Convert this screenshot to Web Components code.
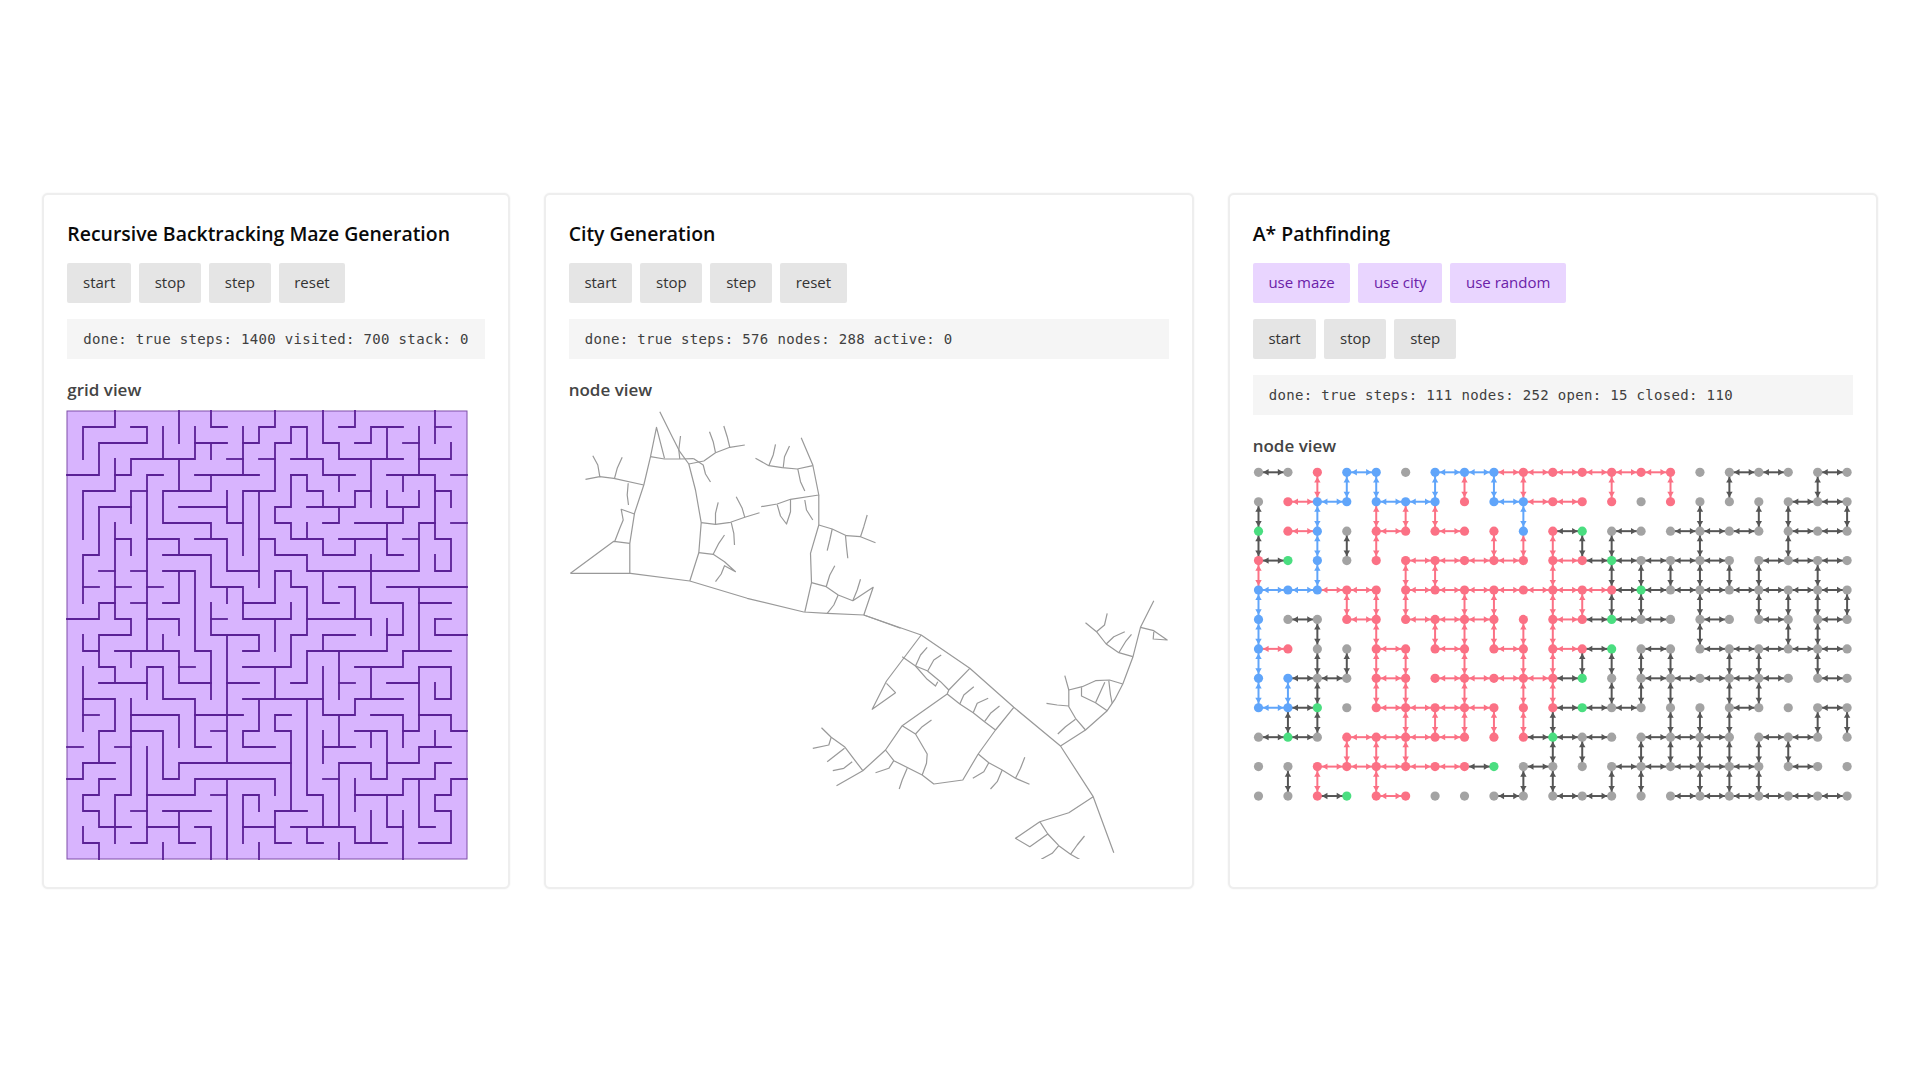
<!DOCTYPE html>
<html>
<head>
<meta charset="utf-8">
<title>Generation demos</title>
<style>
    html, body { margin: 0; height: 100%; background: #fff; }
    body {
        box-sizing: border-box;
        padding-top: 2px;
        display: flex;
        align-items: center;
        justify-content: center;
        font-family: "Open Sans", "Noto Sans", sans-serif;
    }
    .row { display: flex; gap: 34px; align-items: stretch; }
</style>
</head>
<body>
<div class="row">
    <demo-card heading="Recursive Backtracking Maze Generation">
        <ctl-row>
            <ctl-btn>start</ctl-btn><ctl-btn>stop</ctl-btn><ctl-btn>step</ctl-btn><ctl-btn>reset</ctl-btn>
        </ctl-row>
        <stat-box>done: true steps: 1400 visited: 700 stack: 0</stat-box>
        <view-label>grid view</view-label>
        <maze-view></maze-view>
    </demo-card>
    <demo-card heading="City Generation" wide>
        <ctl-row>
            <ctl-btn>start</ctl-btn><ctl-btn>stop</ctl-btn><ctl-btn>step</ctl-btn><ctl-btn>reset</ctl-btn>
        </ctl-row>
        <stat-box>done: true steps: 576 nodes: 288 active: 0</stat-box>
        <view-label>node view</view-label>
        <city-view></city-view>
    </demo-card>
    <demo-card heading="A* Pathfinding" wide>
        <ctl-row>
            <ctl-btn accent>use maze</ctl-btn><ctl-btn accent>use city</ctl-btn><ctl-btn accent>use random</ctl-btn>
        </ctl-row>
        <ctl-row>
            <ctl-btn>start</ctl-btn><ctl-btn>stop</ctl-btn><ctl-btn>step</ctl-btn>
        </ctl-row>
        <stat-box>done: true steps: 111 nodes: 252 open: 15 closed: 110</stat-box>
        <view-label>node view</view-label>
        <astar-view></astar-view>
    </demo-card>
</div>

<script>
class DemoCard extends HTMLElement {
    constructor() {
        super();
        this.attachShadow({ mode: 'open' });
        this.shadowRoot.innerHTML = `
            <style>
                :host {
                    display: block;
                    box-sizing: border-box;
                    background: #fff;
                    border: 2px solid #eeeeee;
                    border-radius: 6px;
                    box-shadow: 0 0 2px rgba(0, 0, 0, 0.07);
                    padding: 23px 23px 28px;
                }
                :host([wide]) { width: 650px; }
                h2 {
                    margin: 0 0 15px;
                    font-size: 19.45px;
                    line-height: 31px;
                    height: 30px;
                    font-weight: 600;
                    color: #0a0a0a;
                    white-space: nowrap;
                }
            </style>
            <h2>${this.getAttribute('heading')}</h2>
            <slot></slot>
        `;
    }
}

class CtlRow extends HTMLElement {
    constructor() {
        super();
        this.attachShadow({ mode: 'open' });
        this.shadowRoot.innerHTML = `
            <style>
                :host { display: flex; gap: 8px; margin-bottom: 16px; }
            </style>
            <slot></slot>
        `;
    }
}

class CtlBtn extends HTMLElement {
    constructor() {
        super();
        this.attachShadow({ mode: 'open' });
        this.shadowRoot.innerHTML = `
            <style>
                :host {
                    display: block;
                    height: 40px;
                    line-height: 39px;
                    padding: 0 15.7px;
                    border-radius: 2px;
                    background: #e5e5e5;
                    color: #333;
                    font-size: 15px;
                    cursor: pointer;
                }
                :host([accent]) { background: #e9d5ff; color: #6b21a8; }
            </style>
            <slot></slot>
        `;
    }
}

class StatBox extends HTMLElement {
    constructor() {
        super();
        this.attachShadow({ mode: 'open' });
        this.shadowRoot.innerHTML = `
            <style>
                :host {
                    display: block;
                    height: 40px;
                    line-height: 40px;
                    padding: 0 16px;
                    background: #f5f5f5;
                    color: #404040;
                    font-family: "DejaVu Sans Mono", "Liberation Mono", monospace;
                    font-size: 14px;
                    letter-spacing: 0.33px;
                    white-space: nowrap;
                }
            </style>
            <slot></slot>
        `;
    }
}

class ViewLabel extends HTMLElement {
    constructor() {
        super();
        this.attachShadow({ mode: 'open' });
        this.shadowRoot.innerHTML = `
            <style>
                :host {
                    display: block;
                    margin: 16px 0 10px;
                    height: 26px;
                    line-height: 29px;
                    font-size: 17px;
                    font-weight: 600;
                    color: #444;
                }
            </style>
            <slot></slot>
        `;
    }
}

const MAZE_WALLS = [
    '3,0 3,1 1,1 1,3', '4,1 5,1 5,2 2,2 2,4 0,4', '6,1 6,3', '7,0 7,2',
    '8,1 8,3 4,3 4,4 3,4', '3,3 3,5 1,5 1,8', '8,2 10,2', '9,2 9,3', '9,0 9,1 10,1',
    '11,1 11,4', '10,3 11,3', '11,2 12,2 12,1 13,1 13,0', '8,4 12,4', '7,3 7,5',
    '9,4 9,5 6,5 6,7 9,7 9,8', '6,4 5,4 5,15', '4,5 5,5', '4,5 4,7', '2,6 4,6',
    '2,6 2,9 1,9 1,12', '3,7 3,13 4,13 4,14 2,14 2,16 3,16 3,17', '3,8 4,8 4,9',
    '2,10 3,10', '4,10 5,10', '1,11 2,11', '3,11 4,11', '5,11 6,11', '4,12 5,12',
    '0,13 2,13 2,12 3,12', '1,14 1,15 2,15', '5,8 7,8 7,9',
    '6,9 9,9 9,11 11,11 11,13 14,13 14,12', '6,10 8,10 8,15 9,15 9,18', '7,10 7,12 6,12',
    '5,13 7,13 7,14', '6,14 6,15', '7,6 10,6', '10,5 10,7 11,7',
    '14,2 13,2 13,5 11,5 11,9', '12,5 12,11', '8,8 10,8 10,10 12,10', '12,3 13,3',
    '14,2 14,1 15,1 15,3', '14,3 16,3 16,4 18,4', '17,4 17,5',
    '14,4 15,4 15,5 16,5 16,6', '14,4 14,6 13,6 13,7 14,7 14,8 16,8 16,9 18,9 18,8',
    '15,6 18,6 18,5 19,5', '19,3 19,6', '17,6 17,7 16,7', '15,7 15,8',
    '18,7 21,7 21,6 20,6 20,5', '21,6 22,6 22,5', '20,7 20,9 21,9', '17,8 20,8', '21,8 22,8',
    '16,0 16,2 17,2 17,3 21,3', '18,0 18,1 17,1', '18,2 19,2 19,1 21,1', '20,1 20,3',
    '21,2 22,2', '22,1 22,4 20,4', '22,4 23,4 23,8 24,8 24,10 23,10 23,9',
    '22,3 24,3 24,2', '23,0 23,2', '23,1 24,1', '24,4 25,4', '21,4 21,5',
    '23,5 24,5 24,6', '24,7 25,7', '23,7 22,7 22,10 15,10 15,9 13,9 13,8 12,8',
    '19,9 19,12 21,12 21,14 20,14', '20,13 20,15 15,15 15,17 14,17', '16,14 18,14', '16,14 16,15',
    '22,11 22,15', '21,15 24,15', '21,15 21,16 18,16', '20,11 25,11', '22,12 24,12',
    '23,13 24,13', '23,13 23,14 25,14', '16,10 16,12 17,12', '17,11 18,11 18,13',
    '15,13 19,13 19,14', '13,12 13,10 14,10 14,11 15,11 15,14 14,14 14,16 11,16', '13,12 11,12',
    '10,11 10,12', '9,12 9,14 12,14 12,15 11,15', '9,13 10,13', '10,14 10,22', '10,23 10,28',
    '13,13 13,15', '3,15 7,15 7,17 9,17', '4,15 4,16', '7,16 8,16',
    '1,16 1,20', '1,18 3,18 3,20 2,20 2,22', '1,22 3,22', '1,22 1,23 0,23', '1,19 2,19',
    '0,21 1,21', '3,21 4,21', '4,18 4,24 3,24 3,27', '4,19 7,19 7,21',
    '4,20 6,20 6,23 7,23 7,22 14,22', '5,21 5,27 4,27', '5,24 8,24 8,23 13,23 13,24',
    '4,25 5,25', '6,25 9,25', '7,25 7,27 8,27', '5,26 7,26', '8,26 9,26 9,28', '6,27 6,28',
    '9,24 10,24', '3,23 2,23 2,24 1,24 1,25 2,25 2,26 4,26', '1,26 1,27 2,27 2,28',
    '2,17 5,17', '5,18 5,16 6,16 6,18 8,18 8,21 9,21', '8,19 11,19', '9,20 10,20',
    '10,17 12,17', '13,16 13,18', '11,18 16,18', '12,18 12,20 11,20 11,21 13,21',
    '16,16 16,19 18,19 18,18 21,18', '15,18 15,24 16,24 16,26',
    '14,19 13,19 13,20 14,20 14,25', '13,25 15,25', '13,25 13,27 14,27', '11,26 13,26',
    '12,25 12,24 11,24 11,27', '12,27 12,28', '17,15 17,18', '17,17 18,17', '19,16 19,18',
    '20,17 22,17', '22,16 24,16 24,18 23,18 23,17', '22,16 22,20 21,20',
    '19,19 21,19 21,21', '22,19 24,19 24,20 25,20',
    '18,20 20,20 20,23 19,23 19,22 17,22 17,26', '19,20 19,21',
    '20,22 22,22 22,21 24,21', '23,20 23,21', '16,20 16,22', '16,21 18,21', '17,19 17,21',
    '16,23 17,23', '18,23 18,25', '18,24 21,24 21,23 23,23 23,22 24,22',
    '22,23 22,26 23,26', '25,23 24,23 24,24 23,24 23,25 24,25 24,27 22,27',
    '20,24 20,26 21,26', '21,25 21,28', '19,25 19,27', '14,26 18,26 18,27 20,27',
    '15,26 15,27 16,27', '17,27 17,28'
];

class MazeView extends HTMLElement {
    constructor() {
        super();
        this.attachShadow({ mode: 'open' });
        const size = 16;
        const lines = MAZE_WALLS.map(w => {
            const pts = w.split(' ').map(p => p.split(',').map(n => n * size).join(',')).join(' ');
            return `<polyline points="${pts}"/>`;
        }).join('');
        this.shadowRoot.innerHTML = `
            <style>
                :host { display: block; width: 400px; height: 448px; }
                svg { display: block; overflow: visible; }
            </style>
            <svg width="400" height="448" viewBox="0 0 400 448">
                <rect x="0" y="0" width="400" height="448" fill="#d8b4fe" stroke="#7e4fa8" stroke-width="1"/>
                <g fill="none" stroke="#5b2196" stroke-width="1.8" stroke-linecap="square">${lines}</g>
            </svg>
        `;
    }
}

// city roads, read off in two pieces of the picture (x3 coordinates)
const CITY_A = [
    [30,520,210,520,388,543,560,595,730,636,800,640,910,645,1020,685],
    [30,520,160,424,208,430],
    [208,520,208,430,222,340,250,255,270,170,288,82,312,175],
    [270,170,312,177,358,177,400,176],
    [298,35,335,110,358,155,385,192,405,270,422,368,415,458,388,543],
    [358,177,355,150,360,108],
    [385,192,430,183,465,158,508,142,553,135],
    [465,158,458,125,447,95],
    [508,142,500,110,490,78],
    [400,176,428,195,435,222,450,246],
    [250,255,160,235,118,230,75,238],
    [118,230,112,195,97,167],
    [162,235,170,205,185,172],
    [203,250,200,285,204,315],
    [222,342,182,328,188,360,178,385,163,424],
    [422,368,465,373,510,367,553,352,597,338],
    [465,373,465,340,473,307],
    [553,352,545,325,527,290],
    [512,367,520,400,522,435],
    [415,458,458,463,492,485,525,515,492,497,482,522,465,545],
    [458,463,475,430,492,405],
    [602,320,650,312,690,298,775,285,757,195,722,113],
    [757,197,710,207,665,203,625,197,585,175],
    [625,197,638,165,645,133],
    [668,203,672,170,687,138],
    [712,207,720,245,733,273],
    [650,314,660,348,678,372,690,335,690,300],
    [733,300,738,330,757,360],
    [775,285,775,375,750,460,753,548,733,636],
    [775,375,815,387,858,407,900,410,945,428],
    [815,387,808,420,800,452],
    [855,407,858,440,862,475],
    [900,410,910,380,920,345],
    [753,548,797,560,833,585,877,602,938,562,910,645],
    [797,560,808,525,823,497],
    [877,602,890,570,900,538],
    [833,585,820,615,800,640]
];
const CITY_B = [
    [190,105,362,165,508,265,640,382,780,498,878,650,940,818],
    [362,165,258,303,215,388,285,338,258,310],
    [305,230,345,258,380,272,420,305,445,330],
    [345,258,380,298,405,318,412,305],
    [345,258,360,225,380,202],
    [382,272,400,240,422,225],
    [508,265,445,330,440,342,305,437,255,510,187,572,108,617],
    [440,342,478,372,518,398,552,425,585,450],
    [640,382,585,450,533,522,487,600,400,612,365,585,280,542,255,510],
    [478,372,490,345,520,320],
    [518,398,530,370,563,355],
    [552,425,570,400,597,378],
    [305,437,345,462,380,522,378,550,365,585],
    [345,462,365,440,393,420],
    [187,572,132,500,92,472,63,443],
    [92,472,85,495,37,505],
    [132,505,80,545],
    [155,545,130,565,97,572],
    [280,542,265,565,225,578],
    [320,565,305,600,296,627],
    [533,522,565,548,605,570,645,595,687,613],
    [565,548,550,575,517,595],
    [605,570,590,605,570,627],
    [645,595,660,565,673,532],
    [780,498,855,450,920,392,945,355,967,312,997,232,1020,142,1060,62],
    [1020,142,1060,152,1100,180,1058,177,1060,155],
    [997,230,955,218,917,192,888,155,855,128],
    [888,155,912,135,920,100],
    [917,192,940,170,973,155],
    [955,218,975,185,993,163],
    [967,312,927,300,885,302,845,320,805,330,793,287],
    [805,330,805,380,825,415,855,450],
    [805,378,770,375,738,370],
    [825,418,795,440,772,462],
    [920,392,885,368,843,348,843,322],
    [885,368,900,335,913,307],
    [925,302,930,345,935,370],
    [878,650,805,698,718,725,645,775,688,800,742,762,718,725],
    [742,762,775,797,810,823,850,845],
    [775,797,755,820,722,838],
    [810,823,830,795,852,768]
];

class CityView extends HTMLElement {
    constructor() {
        super();
        this.attachShadow({ mode: 'open' });
        const toLine = (road, ox, oy) => {
            const pts = [];
            for (let i = 0; i < road.length; i += 2) {
                pts.push(`${(ox + road[i] / 3).toFixed(1)},${(oy + road[i + 1] / 3).toFixed(1)}`);
            }
            return `<polyline points="${pts.join(' ')}"/>`;
        };
        const a = CITY_A.map(r => toLine(r, 560 - 568.5, 400 - 411)).join('');
        const b = CITY_B.map(r => toLine(r, 800 - 568.5, 580 - 411)).join('');
        this.shadowRoot.innerHTML = `
            <style>
                :host { display: block; width: 600px; height: 448px; }
                svg { display: block; }
            </style>
            <svg width="600" height="448" viewBox="0 0 600 448">
                <g fill="none" stroke="#999" stroke-width="1.2" stroke-linejoin="round">${a}${b}</g>
            </svg>
        `;
    }
}

const NODE_ROWS = [
    'ggrbbgbbbrrrrrrgggggg',
    'grbbbbbrbbrrrgrgggggg',
    'nrbgrrrrrbrnggggggggg',
    'rnbgrrrrrrrrngggggggg',
    'bbbrrrrrrrrrrnggggggg',
    'bggrrrrrrrrrngggggggg',
    'brggrrrrrrrrngggggggg',
    'bbggrrrrrrrnggggggggg',
    'bbngrrrrrrrnggggggggg',
    'gngrrrrrrrngggggggggg',
    'ggrrrrrrngggggggggggg',
    'ggrnrrggggggggggggggg'
];
const H_EDGES = [
    [0,3,6,7,8,9,10,11,12,13,16,17,19],
    [1,2,4,5,8,9,10,18,19],
    [1,4,6,10,12,14,15,16,18,19],
    [0,5,6,7,8,10,11,12,13,14,15,17,18,19],
    [0,1,2,3,5,6,7,8,9,10,11,12,13,14,15,16,17,18,19],
    [1,3,5,6,7,10,11,12,13,15,17,19],
    [0,4,6,8,10,11,13,15,16,17,18,19],
    [1,2,4,6,7,8,9,10,13,14,15,16,17,19],
    [0,1,4,5,6,7,10,11,12,16,19],
    [0,1,3,4,5,6,9,10,11,13,14,15,17,18],
    [2,3,4,5,6,7,9,12,13,14,15,16,18],
    [2,4,8,10,11,14,15,16,17,18,19]
];
const V_EDGES = [
    [2,3,4,6,7,8,9,12,14,16,19],
    [0,2,4,5,6,9,15,17,18,20],
    [0,2,3,4,8,9,10,11,12,15,18],
    [0,2,5,6,10,12,13,14,15,16,17,19],
    [0,3,4,5,7,8,10,11,12,13,15,17,18,19,20],
    [0,2,4,6,7,8,9,10,15,18,19],
    [0,2,3,4,5,7,9,10,11,12,13,14,16,17,19],
    [0,1,2,4,5,7,9,10,12,13,14,16,17],
    [1,2,5,6,7,8,9,10,14,15,16,19,20],
    [3,4,5,10,11,13,14,15,16,17,18],
    [1,2,4,9,10,12,13,15,16,17]
];
const NODE_COLORS = { g: '#a3a3a3', r: '#fb7185', b: '#60a5fa', n: '#4ade80' };

class AstarView extends HTMLElement {
    constructor() {
        super();
        this.attachShadow({ mode: 'open' });
        const gap = 29.43;
        const px = c => 5.5 + c * gap;
        const py = r => 5.3 + r * gap;
        const edgeColor = (a, b) => {
            if (a === 'b' && b === 'b') return NODE_COLORS.b;
            if ('rb'.includes(a) && 'rb'.includes(b)) return NODE_COLORS.r;
            return '#555555';
        };
        // line with a small arrow head at both ends, stopping at the node rim
        const edge = (x1, y1, x2, y2, color) => {
            const dx = Math.sign(x2 - x1), dy = Math.sign(y2 - y1);
            const head = (x, y, ux, uy) => {
                const tx = x + ux * 4.6, ty = y + uy * 4.6;
                const bx = tx + ux * 5.5, by = ty + uy * 5.5;
                return `<polygon points="${tx},${ty} ${bx - uy * 3.2},${by - ux * 3.2} ${bx + uy * 3.2},${by + ux * 3.2}" fill="${color}"/>`;
            };
            return `<line x1="${x1}" y1="${y1}" x2="${x2}" y2="${y2}" stroke="${color}" stroke-width="2"/>`
                + head(x1, y1, dx, dy) + head(x2, y2, -dx, -dy);
        };
        let out = '';
        H_EDGES.forEach((cols, r) => cols.forEach(c => {
            out += edge(px(c), py(r), px(c + 1), py(r), edgeColor(NODE_ROWS[r][c], NODE_ROWS[r][c + 1]));
        }));
        V_EDGES.forEach((cols, r) => cols.forEach(c => {
            out += edge(px(c), py(r), px(c), py(r + 1), edgeColor(NODE_ROWS[r][c], NODE_ROWS[r + 1][c]));
        }));
        NODE_ROWS.forEach((row, r) => [...row].forEach((k, c) => {
            out += `<circle cx="${px(c)}" cy="${py(r)}" r="4.6" fill="${NODE_COLORS[k]}"/>`;
        }));
        this.shadowRoot.innerHTML = `
            <style>
                :host { display: block; width: 600px; height: 340px; }
                svg { display: block; }
            </style>
            <svg width="600" height="340" viewBox="0 0 600 340">${out}</svg>
        `;
    }
}

customElements.define('demo-card', DemoCard);
customElements.define('ctl-row', CtlRow);
customElements.define('ctl-btn', CtlBtn);
customElements.define('stat-box', StatBox);
customElements.define('view-label', ViewLabel);
customElements.define('maze-view', MazeView);
customElements.define('city-view', CityView);
customElements.define('astar-view', AstarView);
</script>
</body>
</html>
